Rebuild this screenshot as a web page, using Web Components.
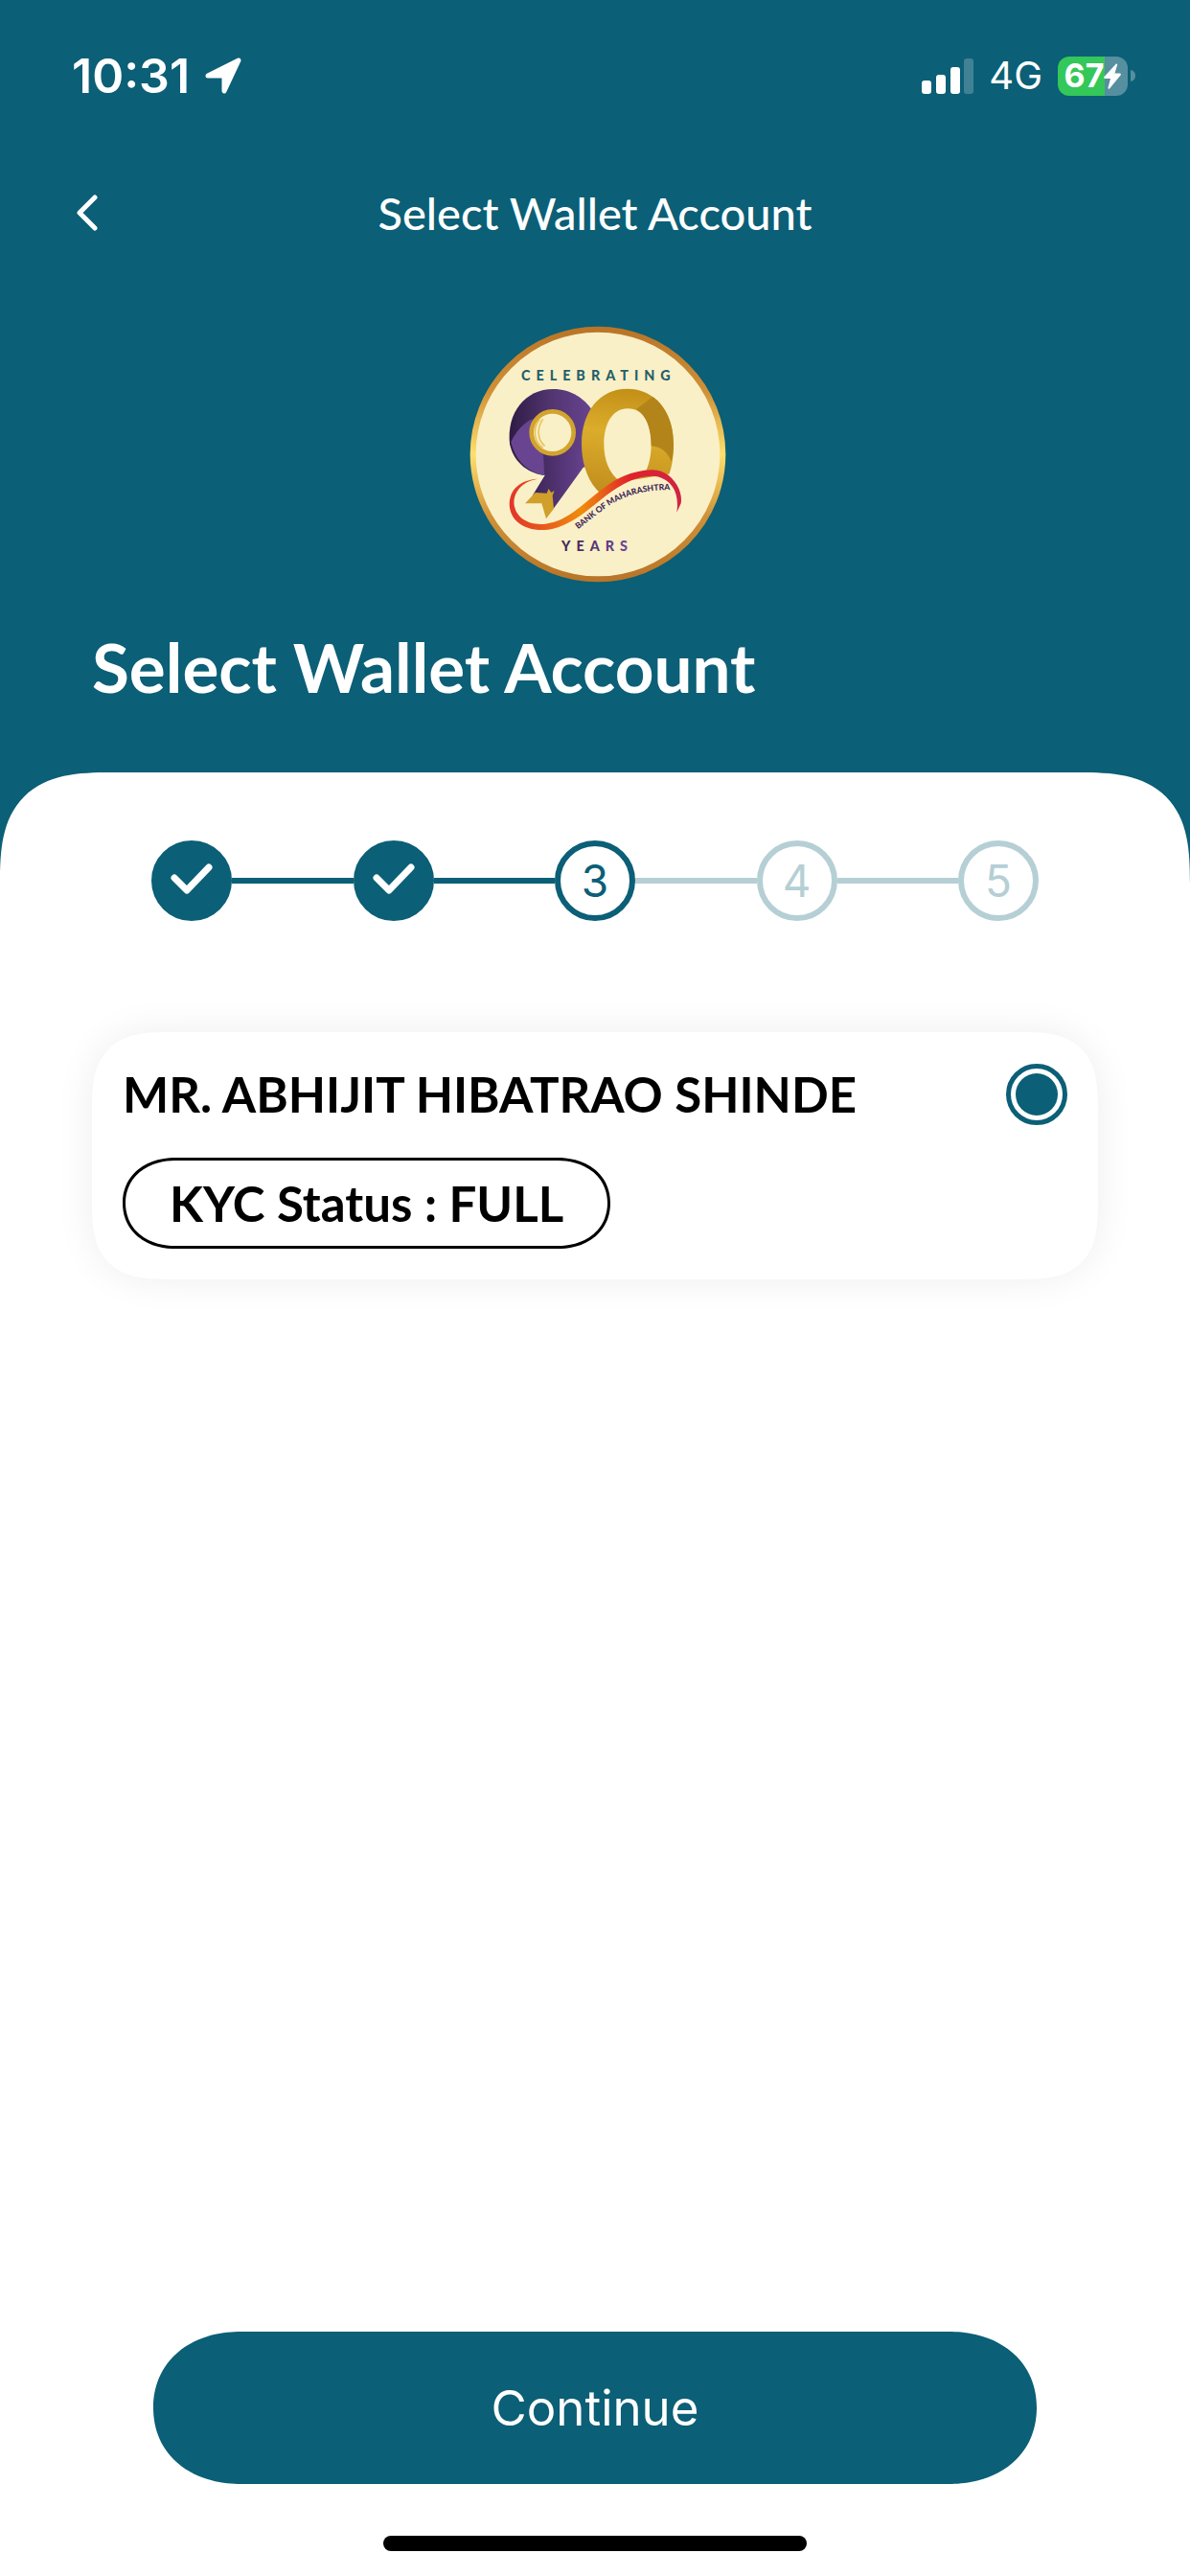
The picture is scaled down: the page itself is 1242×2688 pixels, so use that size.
<!DOCTYPE html>
<html lang="en">
<head>
<meta charset="utf-8">
<meta name="viewport" content="width=device-width, initial-scale=1">
<title>Select Wallet Account</title>
<style>
  :root {
    --brand: #0b5f76;
    --brand-soft: #b5cfd5;
    --display: Lato, "Open Sans", sans-serif;
    --system: Inter, "Liberation Sans", sans-serif;
  }
  body {
    margin: 0;
    background: #fff;
    font-family: var(--display);
  }
</style>
</head>
<body>
<wallet-page>
  <status-bar slot="status" time="10:31" network="4G" battery="67"></status-bar>
  <nav-bar slot="nav">Select Wallet Account</nav-bar>
  <bank-emblem slot="logo"></bank-emblem>
  <span slot="heading">Select Wallet Account</span>
  <step-progress current="3" total="5"></step-progress>
  <account-card status="FULL">MR. ABHIJIT HIBATRAO SHINDE</account-card>
  <primary-button slot="action">Continue</primary-button>
</wallet-page>

<script>
class WalletPage extends HTMLElement {

  constructor() {
    super();
    this.attachShadow({ mode: 'open' });
    this.render();
  }

  render() {
    this.shadowRoot.innerHTML = /* html */ `
    <style>
      :host {
        display: flex;
        flex-direction: column;
        min-height: 100vh;
        background: linear-gradient(var(--brand) 940px, #fff 940px);
      }
      .logo {
        display: flex;
        justify-content: center;
        padding: 54px 0 44px 6px;
      }
      h1 {
        margin: 0;
        padding: 0 96px 66px;
        color: #fff;
        font-size: 71px;
        line-height: 88px;
        font-weight: 700;
      }
      main {
        flex: 1;
        display: flex;
        flex-direction: column;
        background: #fff;
        border-radius: 78px 78px 0 0;
      }
      .content {
        flex: 1;
        display: flex;
        flex-direction: column;
        gap: 116px;
        padding: 71px 96px;
      }
      .action {
        padding: 0 160px 54px;
      }
      .home {
        width: 442px;
        height: 16px;
        margin: 0 auto 26px;
        border-radius: 8px;
        background: #000;
      }
      @supports (corner-shape: superellipse(1.5)) {
        main {
          border-radius: 116px 116px 0 0;
          corner-shape: superellipse(1.5);
        }
      }
    </style>

    <header>
      <slot name="status"></slot>
      <slot name="nav"></slot>
      <div class="logo"><slot name="logo"></slot></div>
      <h1><slot name="heading"></slot></h1>
    </header>
    <main>
      <div class="content"><slot></slot></div>
      <div class="action"><slot name="action"></slot></div>
      <div class="home"></div>
    </main>
    `;
  }
}

class StatusBar extends HTMLElement {

  constructor() {
    super();
    this.attachShadow({ mode: 'open' });
  }

  connectedCallback() {
    this.render();
  }

  render() {
    this.shadowRoot.innerHTML = /* html */ `
    <style>
      :host {
        display: flex;
        align-items: center;
        justify-content: space-between;
        height: 158px;
        padding: 0 57px 0 75px;
        color: #fff;
        font-family: var(--system);
      }
      .side {
        display: flex;
        align-items: center;
      }
      .left { gap: 16px; }
      .right { gap: 16px; }
      .time {
        font-size: 50px;
        line-height: 56px;
        font-weight: 600;
      }
      .network {
        font-size: 40px;
        line-height: 48px;
      }
      .battery {
        display: flex;
        align-items: center;
        gap: 3px;
      }
      .cell {
        display: flex;
        align-items: center;
        justify-content: center;
        box-sizing: border-box;
        width: 73px;
        height: 41px;
        border-radius: 12px;
        background: linear-gradient(90deg, #34c759 67%, #558fa0 67%);
        font-size: 34px;
        line-height: 40px;
        font-weight: 700;
      }
      svg { display: block; }
    </style>

    <div class="side left">
      <span class="time">${this.getAttribute('time')}</span>
      <svg width="38" height="38" viewBox="0 0 38 38" fill="#fff" stroke="#fff" stroke-width="5" stroke-linejoin="round">
        <path d="M3 19 35 3 20 35 V19 Z"/>
      </svg>
    </div>
    <div class="side right">
      <svg width="54" height="37" viewBox="0 0 54 37" fill="#fff">
        <rect x="0" y="23" width="10" height="14" rx="3"/>
        <rect x="15" y="17" width="10" height="20" rx="3"/>
        <rect x="30" y="9" width="10" height="28" rx="3"/>
        <rect x="44" y="0" width="10" height="37" rx="3" opacity=".22"/>
      </svg>
      <span class="network">${this.getAttribute('network')}</span>
      <div class="battery">
        <div class="cell">
          <span>${this.getAttribute('battery')}</span>
          <svg width="18" height="27" viewBox="0 0 18 27" fill="#fff">
            <path d="M13 .5 Q14.500 0 14 2 L11.500 10.500 H17 Q18.500 11 17.500 12.500 L6 26.500 Q4.500 27.500 4.500 25.500 L7 16 H1 Q-.5 15.500 .5 14 Z"/>
          </svg>
        </div>
        <svg width="5" height="12" viewBox="0 0 5 12"><path d="M0 0 Q5 1 5 6 T0 12 Z" fill="#558fa0"/></svg>
      </div>
    </div>
    `;
  }
}

class NavBar extends HTMLElement {

  constructor() {
    super();
    this.attachShadow({ mode: 'open' });
    this.render();
  }

  render() {
    this.shadowRoot.innerHTML = /* html */ `
    <style>
      :host {
        display: grid;
        grid-template-columns: 120px 1fr 120px;
        align-items: center;
        height: 128px;
        color: #fff;
      }
      button {
        display: flex;
        justify-content: flex-end;
        width: 102px;
        padding: 24px 0;
        border: 0;
        background: none;
        color: inherit;
      }
      .title {
        text-align: center;
        font-size: 47px;
        line-height: 60px;
        font-weight: 500;
      }
    </style>

    <button type="button" aria-label="Back">
      <svg width="22" height="38" viewBox="0 0 22 38" fill="none" stroke="currentColor" stroke-width="5" stroke-linecap="round" stroke-linejoin="round">
        <path d="M19 3 3 19 19 35"/>
      </svg>
    </button>
    <div class="title"><slot></slot></div>
    `;
  }
}

class BankEmblem extends HTMLElement {

  constructor() {
    super();
    this.attachShadow({ mode: 'open' });
    this.render();
  }

  render() {
    this.shadowRoot.innerHTML = /* html */ `
    <style>
      :host {
        display: block;
        width: 268px;
        height: 268px;
      }
      svg {
        display: block;
        width: 100%;
        height: 100%;
      }
      text {
        font-family: Lato, sans-serif;
        font-weight: 900;
      }
    </style>

    <svg viewBox="30 30 804 804" role="img" aria-label="Celebrating 90 years, Bank of Maharashtra">
      <defs>
        <linearGradient id="rim" x2="0" y2="1">
          <stop offset="0" stop-color="#b97528"/>
          <stop offset=".25" stop-color="#cf9137"/>
          <stop offset=".5" stop-color="#ffdf6c"/>
          <stop offset=".75" stop-color="#cf9137"/>
          <stop offset="1" stop-color="#b97528"/>
        </linearGradient>
        <linearGradient id="nine">
          <stop offset="0" stop-color="#2f1b45"/>
          <stop offset=".5" stop-color="#51356f"/>
          <stop offset="1" stop-color="#684390"/>
        </linearGradient>
        <linearGradient id="tail">
          <stop offset="0" stop-color="#3d2558"/>
          <stop offset="1" stop-color="#68438f"/>
        </linearGradient>
        <linearGradient id="zero" x1=".3" y1="0" x2=".2" y2="1">
          <stop offset="0" stop-color="#c49118"/>
          <stop offset=".4" stop-color="#dbad2b"/>
          <stop offset="1" stop-color="#c18d1d"/>
        </linearGradient>
        <linearGradient id="swoosh">
          <stop offset="0" stop-color="#e3352a"/>
          <stop offset=".18" stop-color="#e6561d"/>
          <stop offset=".42" stop-color="#f08c0b"/>
          <stop offset=".7" stop-color="#e0222b"/>
          <stop offset="1" stop-color="#cf2444"/>
        </linearGradient>
        <linearGradient id="years">
          <stop offset="0" stop-color="#3a2553"/>
          <stop offset="1" stop-color="#7048a0"/>
        </linearGradient>
        <path id="curve" d="M370 667 C450 608 500 540 670 544"/>
      </defs>

      <circle cx="432" cy="432" r="391" fill="#faf0c8" stroke="url(#rim)" stroke-width="18"/>
      <text x="192" y="202" font-size="43" letter-spacing="18" fill="#245f6c">CELEBRATING</text>

      <!-- nine -->
      <path fill="url(#nine)" d="M156 400 C145 302 205 228 292 228 C350 228 392 260 412 292 L400 470 L262 498 C205 490 166 450 156 400 Z"/>
      <path fill="#694591" d="M160 394 C175 362 196 338 226 322 L262 440 L264 498 C210 488 172 448 160 394 Z"/>
      <path fill="url(#tail)" d="M262 430 L340 400 L396 460 L292 604 L228 560 L266 498 Z"/>
      <circle cx="290" cy="364" r="66" fill="#faf0c8" stroke="#d2a42e" stroke-width="14"/>
      <path d="M250 322 C226 350 232 394 260 412 M260 322 C240 350 242 388 266 406" fill="none" stroke="#e7c45d" stroke-width="5"/>
      <path fill="#d0a02a" d="M204 586 L236 552 L272 554 L278 540 L286 552 L296 546 L290 562 L294 602 L270 634 L256 586 Z"/>

      <!-- zero -->
      <path fill="url(#zero)" fill-rule="evenodd" d="M524 227 C612 227 669 300 669 400 C669 436 665 470 655 494 L494 520 L440 554 C400 520 381 460 381 400 C381 300 436 227 524 227 Z M526 289 C478 289 451 336 451 400 C451 450 468 492 498 514 L580 490 C592 466 599 436 599 400 C599 336 574 289 526 289 Z"/>
      <path fill="#b38419" d="M604 252 C646 282 669 336 669 400 C669 422 667 440 662 456 C652 426 630 408 599 406 C599 354 584 308 552 291 Z"/>

      <!-- ribbon -->
      <path fill="url(#swoosh)" d="M244 509 C190 518 165 556 170 592 C178 636 222 656 268 650 C390 634 440 486 602 481 C658 480 700 540 692 586 L679 614 C690 540 650 500 600 500 C470 504 400 650 276 668 C206 676 156 642 155 588 C156 540 190 512 244 509 Z"/>
      <text font-size="26" fill="#3f2856"><textPath href="#curve">BANK OF MAHARASHTRA</textPath></text>
      <text x="318" y="736" font-size="43" letter-spacing="18" fill="url(#years)">YEARS</text>
    </svg>
    `;
  }
}

class StepProgress extends HTMLElement {

  constructor() {
    super();
    this.attachShadow({ mode: 'open' });
  }

  connectedCallback() {
    this.render();
  }

  // Steps before the current one are ticked, later ones are greyed out
  renderStep(step, current) {
    if (step < current) {
      return /* html */ `
      <li class="done">
        <svg width="44" height="36" viewBox="0 0 44 36" fill="none" stroke="#fff" stroke-width="7" stroke-linecap="round" stroke-linejoin="round" role="img" aria-label="Step ${step} done">
          <path d="M4 15 17 28 40 4"/>
        </svg>
      </li>`;
    }
    return `<li class="${step === current ? 'current' : 'todo'}">${step}</li>`;
  }

  render() {
    const current = Number(this.getAttribute('current'));
    const total = Number(this.getAttribute('total'));
    let steps = '';
    for (let step = 1; step <= total; step++) {
      if (step > 1) {
        steps += `<li class="line ${step <= current ? 'active' : ''}" role="presentation"></li>`;
      }
      steps += this.renderStep(step, current);
    }

    this.shadowRoot.innerHTML = /* html */ `
    <style>
      :host {
        display: block;
        padding: 0 62px;
        font-family: var(--system);
      }
      ol {
        display: flex;
        align-items: center;
        margin: 0;
        padding: 0;
        list-style: none;
      }
      li {
        display: flex;
        align-items: center;
        justify-content: center;
        box-sizing: border-box;
        width: 84px;
        height: 84px;
        border: 6px solid var(--brand);
        border-radius: 50%;
        color: var(--brand);
        font-size: 46px;
        line-height: 56px;
      }
      .done { background: var(--brand); }
      .todo {
        border-color: var(--brand-soft);
        color: var(--brand-soft);
      }
      .line {
        flex: 1;
        height: 6px;
        border: 0;
        border-radius: 0;
        background: var(--brand-soft);
      }
      .line.active { background: var(--brand); }
    </style>

    <ol>${steps}</ol>
    `;
  }
}

class AccountCard extends HTMLElement {

  constructor() {
    super();
    this.attachShadow({ mode: 'open' });
  }

  connectedCallback() {
    this.render();
  }

  render() {
    this.shadowRoot.innerHTML = /* html */ `
    <style>
      :host {
        display: block;
        border-radius: 52px;
        background: #fff;
        box-shadow: 0 0 40px rgba(0, 0, 0, .07);
        color: #000;
        font-size: 51px;
        line-height: 64px;
        font-weight: 700;
      }
      label {
        display: flex;
        flex-direction: column;
        align-items: flex-start;
        gap: 34px;
        padding: 33px 32px 32px;
      }
      .row {
        display: flex;
        align-items: center;
        justify-content: space-between;
        align-self: stretch;
      }
      input {
        appearance: none;
        box-sizing: border-box;
        width: 64px;
        height: 64px;
        margin: 0;
        border: 5px solid var(--brand);
        border-radius: 50%;
      }
      input:checked {
        padding: 5px;
        background: var(--brand) content-box;
      }
      .status {
        box-sizing: border-box;
        padding: 13px 46px 12px;
        border: 3px solid #000;
        border-radius: 48px;
      }
      @supports (corner-shape: superellipse(1.1)) {
        :host {
          border-radius: 80px;
          corner-shape: superellipse(1.5);
        }
        .status {
          border-radius: 56px / 48px;
          corner-shape: superellipse(1.1);
        }
      }
    </style>

    <label>
      <span class="row">
        <slot></slot>
        <input type="radio" name="account" checked>
      </span>
      <span class="status">KYC Status : ${this.getAttribute('status')}</span>
    </label>
    `;
  }
}

class PrimaryButton extends HTMLElement {

  constructor() {
    super();
    this.attachShadow({ mode: 'open' });
    this.render();
  }

  render() {
    this.shadowRoot.innerHTML = /* html */ `
    <style>
      :host { display: block; }
      button {
        display: block;
        width: 100%;
        padding: 48px 0 47px;
        border: 0;
        border-radius: 80px;
        background: var(--brand);
        color: #fff;
        font: 400 51px/64px var(--system);
      }
      @supports (corner-shape: superellipse(1.1)) {
        button {
          border-radius: 92px / 80px;
          corner-shape: superellipse(1.1);
        }
      }
    </style>

    <button type="button"><slot></slot></button>
    `;
  }
}

customElements.define('wallet-page', WalletPage);
customElements.define('status-bar', StatusBar);
customElements.define('nav-bar', NavBar);
customElements.define('bank-emblem', BankEmblem);
customElements.define('step-progress', StepProgress);
customElements.define('account-card', AccountCard);
customElements.define('primary-button', PrimaryButton);
</script>
</body>
</html>
